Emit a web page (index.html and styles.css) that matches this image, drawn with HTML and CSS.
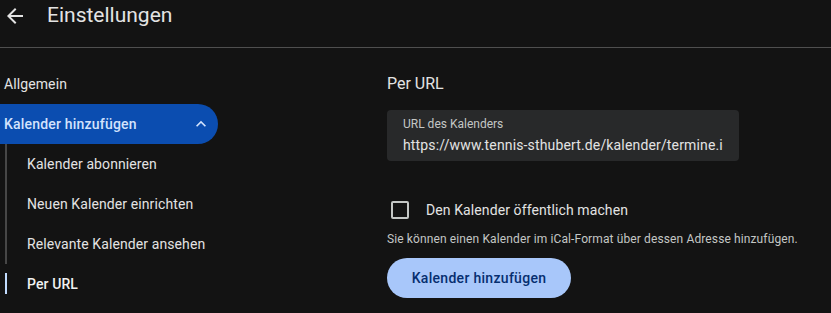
FILE: index.html
```html
<!DOCTYPE html>
<html lang="de">
<head>
    <meta charset="UTF-8">
    <meta name="viewport" content="width=device-width, initial-scale=1.0">
    <title>Einstellungen</title>
    <link rel="stylesheet" href="styles.css">
</head>
<body>
    <header class="topbar">
        <div class="back-btn">
            <svg viewBox="0 0 24 24" width="24" height="24"><path d="M20 11H7.83l5.59-5.59L12 4l-8 8 8 8 1.41-1.41L7.83 13H20v-2z" fill="#e3e3e3"/></svg>
        </div>
        <h1 class="title">Einstellungen</h1>
    </header>

    <main class="layout">
        <!-- Navigation links -->
        <nav class="nav">
            <div class="nav-item">Allgemein</div>
            <div class="nav-item nav-open">
                <span>Kalender hinzufügen</span>
                <svg viewBox="0 0 24 24" width="20" height="20"><path d="M12 8l-6 6 1.41 1.41L12 10.83l4.59 4.58L18 14z" fill="#d3e3fd"/></svg>
            </div>
            <div class="sub-list">
                <div class="sub-item">Kalender abonnieren</div>
                <div class="sub-item">Neuen Kalender einrichten</div>
                <div class="sub-item">Relevante Kalender ansehen</div>
                <div class="sub-item active">Per URL</div>
            </div>
        </nav>

        <!-- Inhalt -->
        <section class="content">
            <h2 class="section-title">Per URL</h2>
            <div class="field">
                <div class="field-label">URL des Kalenders</div>
                <div class="field-value">https://www.tennis-sthubert.de/kalender/termine.ics</div>
            </div>
            <label class="check-row">
                <span class="checkbox"></span>
                <span>Den Kalender öffentlich machen</span>
            </label>
            <p class="hint">Sie können einen Kalender im iCal-Format über dessen Adresse hinzufügen.</p>
            <button class="primary-btn">Kalender hinzufügen</button>
        </section>
    </main>
</body>
</html>
```

FILE: styles.css
```css
body {
    background-color: #131313;
    font-family: Roboto, 'Liberation Sans', sans-serif;
    color: #e3e3e3;
    margin: 0;
    padding: 0;
    overflow: hidden;
}
.topbar {
    display: flex;
    align-items: center;
    height: 47px;
    border-bottom: 1px solid #4f4f4f;
}
.back-btn {
    width: 24px;
    height: 24px;
    margin-left: 3px;
    margin-top: -16px;
}
.back-btn svg {
    display: block;
}
.title {
    font-size: 21px;
    font-weight: 400;
    margin: 0 0 0 20px;
    margin-top: -17px;
}
.layout {
    display: flex;
    padding-top: 16px;
}
.nav {
    width: 218px;
    font-size: 14px;
    letter-spacing: 0.1px;
}
.nav-item {
    height: 40px;
    display: flex;
    align-items: center;
    padding-left: 4px;
}
.nav-open {
    justify-content: space-between;
    background-color: #0b4db0;
    color: #d3e3fd;
    font-weight: 500;
    letter-spacing: 0.2px;
    border-radius: 0 20px 20px 0;
    padding-right: 7px;
}
.nav-open svg {
    display: block;
}
.sub-item {
    position: relative;
    height: 40px;
    display: flex;
    align-items: center;
    padding-left: 27px;
}
.sub-item::before {
    content: '';
    position: absolute;
    left: 5px;
    top: 0;
    width: 2px;
    height: 40px;
    background-color: #474747;
}
.sub-item.active {
    font-weight: 500;
    color: #f1f1f1;
}
.sub-item.active::before {
    top: 9px;
    height: 21px;
    background-color: #c2dcff;
}
.content {
    margin-left: 169px;
}
.section-title {
    font-size: 16px;
    font-weight: 400;
    margin: 0;
    height: 40px;
    line-height: 40px;
}
.field {
    margin-top: 6px;
    width: 336px;
    height: 51px;
    background-color: #28292a;
    border-radius: 4px;
    padding: 0 0 0 16px;
    overflow: hidden;
}
.field-label {
    font-size: 12px;
    color: #c4c7c5;
    padding-top: 6px;
    line-height: 16px;
}
.field-value {
    font-size: 14px;
    letter-spacing: 0.15px;
    white-space: nowrap;
    overflow: hidden;
    width: 320px;
    line-height: 20px;
    margin-top: 3px;
}
.check-row {
    display: flex;
    align-items: center;
    margin-top: 39px;
    height: 20px;
    font-size: 14px;
    letter-spacing: 0.1px;
}
.checkbox {
    width: 14px;
    height: 14px;
    border: 2px solid #c4c7c5;
    border-radius: 2px;
    margin-left: 4px;
    margin-right: 17px;
}
.hint {
    font-size: 12px;
    letter-spacing: 0.12px;
    color: #c4c7c5;
    margin: 11px 0 0 0;
    line-height: 16px;
}
.primary-btn {
    margin-top: 11px;
    height: 40px;
    width: 184px;
    border: none;
    border-radius: 20px;
    background-color: #a8c7fa;
    color: #062e6f;
    font-family: Roboto, 'Liberation Sans', sans-serif;
    font-size: 14px;
    font-weight: 500;
    letter-spacing: 0.3px;
}
```
